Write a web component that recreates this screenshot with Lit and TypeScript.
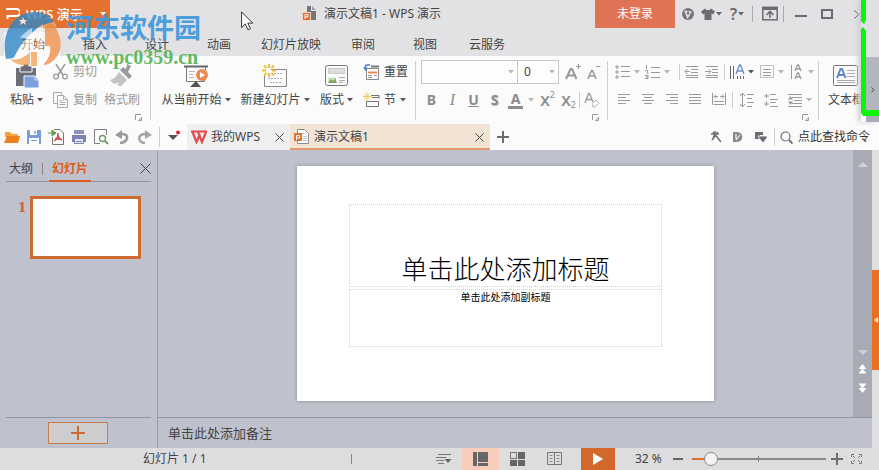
import { LitElement, html, css, svg, TemplateResult } from "lit";
import { customElement } from "lit/decorators.js";

const ic = (w: number, h: number, body: TemplateResult, cls = "") =>
  html`<svg class=${cls} width=${w} height=${h} viewBox="0 0 ${w} ${h}" fill="none" aria-hidden="true">${body}</svg>`;

const caret = (color = "#555") => ic(6, 4, svg`<path d="M0 0h6L3 3.6z" fill=${color}/>`);
const grey = "#9a9a9a";
const pale = "#b5b5b5";
const cross = (s: number, c = "#444") => ic(s, s, svg`<path d="M.5 .5L${s - 0.5} ${s - 0.5}M${s - 0.5} .5L.5 ${s - 0.5}" stroke=${c}/>`);
const lines = (rows: [number, number, number][], c = grey) =>
  svg`${rows.map(([x1, x2, y]) => svg`<path d="M${x1} ${y}.5H${x2}" stroke=${c}/>`)}`;

const icons = {
  paste: ic(26, 24, svg`<path d="M2 4h20v18H2z" fill="#6b6e74"/><path d="M6 2h3a3 3 0 0 1 6 0h3v6H6z" fill="#6b6e74" stroke="#fafafa"/><path d="M10 12h11l4 4v8H10z" fill="#7d9fe0" stroke="#fafafa"/><path d="M21 12v4h4" stroke="#dce6fb"/>`),
  cut: ic(16, 16, svg`<path d="M3 0l7 11M12 0L5 11" stroke=${grey} stroke-width="1.5"/><circle cx="3" cy="12.5" r="2.4" stroke=${grey} stroke-width="1.3"/><circle cx="12" cy="12.5" r="2.4" stroke=${grey} stroke-width="1.3"/>`),
  copy: ic(16, 16, svg`<path d="M4.500 11.500H.5V.5h8v3" stroke="#aaa"/><path d="M4.500 3.500h6l4 4v8h-10zM10.500 3.500v4h4M6.500 8.500h3M6.500 10.500h6M6.500 12.500h6" stroke="#aaa"/>`),
  brush: ic(24, 24, svg`<path d="M17 0l4 2-3 6 4 4-3 3-9-9 3-3 3 2z" fill="#9b9b9b"/><path d="M9 8l8 8-6 6-4-1 2-3-5 2-4-4c4-1 7-4 9-8z" fill="#c3c3c3"/>`),
  play: ic(26, 24, svg`<path d="M1 2.500h24" stroke="#666" stroke-width="2"/><path d="M3.500 3v14.500h18V15M22.500 3v3" stroke="#777"/><path d="M6 7.500h6M6 10.500h4M6 13.500h5" stroke="#b5b5b5"/><path d="M13 17l5 6H7z" fill="#555"/><circle cx="19" cy="11" r="6" fill="#ea8a55"/><path d="M17 8l5 3-5 3z" fill="#fff"/>`),
  newSlide: ic(26, 24, svg`<path d="M9 5.500h15.500v17H2.500V11" stroke="#888"/><path d="M12 9.500h9M6 14.500h15M8 18.500h11" stroke="#aaa" stroke-dasharray="2 1"/><path d="M7 0v4M7 9v4M0 6.500h4M10 6.500h4M2 1.500l2.500 2.500M9.500 9l2.500 2.500M12 1.500L9.500 4M4.500 9L2 11.500" stroke="#f0bd36" stroke-width="2"/>`),
  layout: ic(24, 22, svg`<rect x=".5" y=".5" width="22" height="20" rx="2" stroke="#777"/><path d="M3.500 3.500h16v5h-16z" fill="#ddd" stroke="#aaa" stroke-dasharray="1 1"/><path d="M3 17.500v-5h8v5z" fill="#cfe3c4"/><path d="M3 18l3-4 2 2 2-3 2 5z" fill="#7cab5c"/><path d="M14 12.500h6M14 15.500h6M14 17.500h4" stroke="#aaa"/>`),
  reset: ic(17, 16, svg`<path d="M3.500 4.500h12v11h-12z" fill="#fff" stroke="#888"/><path d="M8 2.500h8" stroke="#777" stroke-width="2"/><path d="M5 8.500h9" stroke="#ea8a55" stroke-width="2"/><path d="M5 11.500h4M11 11.500h3M5 13.500h4" stroke="#999"/><path d="M7 1H4a3 3 0 0 0-2 3" stroke="#4f81c7" stroke-width="1.6"/><path d="M0 3.500h5L2.500 7z" fill="#4f81c7"/>`),
  section: ic(17, 16, svg`<path d="M9 5.500h7M3.500 9.500h12v5h-12zM8 3.500h8v3" stroke="#777"/><path d="M4 0v9M0 4.500h9M1 1.500l6 6M7 1.500l-6 6" stroke="#f2cf5c"/>`),
  bigger: ic(17, 16, svg`<path d="M1 15L5.500 5h1.500l4.500 10M3 11.500h6.500" stroke=${grey} stroke-width="2"/><path d="M13.500 0v5M11 2.500h5" stroke=${grey}/>`),
  smaller: ic(17, 16, svg`<path d="M2 15L5.500 6.500h1L10 15M3.500 12h5" stroke=${grey} stroke-width="1.6"/><path d="M10 2.500h4.500" stroke=${grey}/>`),
  bullets: ic(16, 14, svg`<path d="M2 0v4M0 2h4M2 5v4M0 7h4M2 10v4M0 12h4" stroke=${grey}/>${lines([[6, 15, 1], [6, 15, 6], [6, 15, 11]])}`),
  numbers: ic(16, 14, svg`<path d="M1.500 0v4M0 5.500h2.500v3H3.500M0 10.500h3v3H0M1 12h2" stroke=${grey}/>${lines([[6, 15, 2], [6, 15, 7], [6, 15, 12]])}`),
  outdent: ic(16, 14, svg`${lines([[2, 14, 1], [7, 14, 4], [7, 14, 7], [2, 14, 10], [2, 14, 12]])}<path d="M6 6.500H1.500M3.500 4L1 6.500 3.500 9" stroke=${grey}/>`),
  indent: ic(16, 14, svg`${lines([[2, 14, 1], [8, 14, 4], [8, 14, 7], [2, 14, 10], [2, 14, 12]])}<path d="M1 6.500h5.500M4.500 4L7 6.500 4.500 9" stroke=${grey}/>`),
  direction: ic(16, 16, svg`<path d="M1.500 2v13M4.500 2v13M8.500 12v3M11.500 12v3M14.500 12v3" stroke="#666"/><path d="M7 10l3.500-9h1L15 10M8.500 7h5" stroke="#6c8ec8" stroke-width="1.4"/>`),
  frame: ic(16, 16, svg`<rect x="1.500" y="1.500" width="13" height="12" stroke="#808080" stroke-dasharray="1 1"/>${lines([[4, 12, 5], [4, 12, 8], [4, 12, 11]])}`),
  textFx: ic(16, 16, svg`<path d="M2.500 1v14" stroke=${grey}/><path d="M6 7l2.500-6h1L12 7M7 5h4M6 15l2.500-6h1L12 15M7 13h4" stroke=${grey} stroke-width="1.300"/>`),
  left: ic(16, 14, lines([[3, 15, 1], [3, 11, 4], [3, 15, 7], [3, 11, 10]])),
  center: ic(16, 14, lines([[3, 15, 1], [5, 13, 4], [3, 15, 7], [5, 13, 10]])),
  right: ic(16, 14, lines([[3, 15, 1], [7, 15, 4], [3, 15, 7], [7, 15, 10]])),
  justify: ic(16, 14, lines([[2, 14, 1], [2, 14, 4], [2, 14, 7], [2, 14, 10]])),
  spread: ic(16, 14, svg`<path d="M1.500 0v12M14.500 0v12M3 3.500h4M9 3.500h4M5 1.500l-2 2 2 2M11 1.500l2 2-2 2M3 8.500h10M3 11.500h10" stroke=${grey}/>`),
  spaceA: ic(16, 16, svg`<path d="M3.500 1v14M1 4l2.500-3L6 4M1 12l2.500 3L6 12M8 2.500h7M8 6.500h5M8 10.500h7M8 14.500h5" stroke=${grey}/>`),
  spaceB: ic(16, 16, svg`<path d="M3.500 2v4M1 4h5M3.500 9v5M1 12h5M7 2.500h6M7 7.500h8M7 10.500h6M7 14.500h8" stroke=${grey}/>`),
  spaceC: ic(16, 16, svg`<path d="M1 2.500h14M5 5.500h10M7 8.500h8M5 11.500h10M1 14.500h14" stroke=${grey}/><path d="M3.500 4L6 7.500H1zM3.500 13L1 9.500h5z" fill=${grey}/>`),
  eraser: ic(16, 16, svg`<path d="M1 11L4.500 1.500h1L9 10M2.500 7.500h5" stroke=${grey} stroke-width="1.300"/><path d="M8 12l4-4 3 3-4 4H9z" stroke="#b5b5b5"/>`),
  textBox: ic(26, 22, svg`<rect x=".5" y=".5" width="24" height="20" rx="1" stroke="#777"/><path d="M4 13L7.500 4h1.500l3.500 9M5.500 10h5.500" stroke="#5f87c9" stroke-width="2"/><path d="M14 5.500h8M14 8.500h8M14 11.500h8M4 15.500h18M4 17.500h18" stroke="#aaa"/>`),
  launcher: ic(7, 7, svg`<path d="M.5 6V.5H6M3.500 6.500h3v-3z" stroke="#999"/>`),
  doc: ic(16, 16, svg`<path d="M5 0h4v5h5v9H5z" fill="#75777b"/><path d="M10 0l4 4h-4z" fill="#a0a2a6"/><path d="M.5 6.500h8v8h-8z" fill="#df6d33" stroke="#f3d5c4"/><path d="M3 13V8.500h3v2.500H3" stroke="#fff"/>`),
  tabDoc: ic(16, 16, svg`<path d="M3.500 .5h7l4 4v10h-11z" fill="#fff" stroke="#8c8c8c"/><path d="M7 4.500h4M9 7.500h4M9 9.500h4M9 11.500h4" stroke="#b9c2cc"/><path d="M0 4h8v8H0z" fill="#e0752f"/><path d="M2.500 11V6.500h3v2.500H3" stroke="#fff"/>`),
  wpsLogo: ic(16, 14, svg`<path d="M0 1.500h16M1.500 2l4 10L9 4M7 2l4 10 4-10" stroke="#e24a4d" stroke-width="2.200"/>`),
  folder: ic(16, 16, svg`<path d="M1 3h5l2 2h6v3H1z" fill="#f6a33c"/><path d="M3 7h13l-2 7H0z" fill="#ee7f1f"/>`),
  save: ic(16, 16, svg`<path d="M1 1h14v14H1z" fill="#7b9cdb"/><path d="M4 1h7v5H4zM3 9h10v6H3z" fill="#fff"/><path d="M9 2v3" stroke="#7b9cdb" stroke-width="1.500"/><path d="M5 11.500h6" stroke="#7b9cdb"/>`),
  pdf: ic(17, 16, svg`<path d="M4.500 8v7.500h11V4l-3.500-3.500H6" stroke="#777"/><path d="M10 4c0 4-2 7-4 8M10 6c1 3 2 5 4 5M7 10l6 0" stroke="#d8393b" stroke-width="1.300"/><path d="M0 4h4M4 1l4 3-4 3z" stroke="#5f9e55" fill="#5f9e55"/>`),
  print: ic(16, 16, svg`<path d="M3 1h10v4H3z" fill="#8f93bd"/><path d="M1 6h14v7H1z" fill="#7d82b5"/><path d="M3.500 9.500h9v5h-9z" fill="#e7e8f3" stroke="#7d82b5"/><path d="M5 12.500h6" stroke="#7d82b5"/>`),
  preview: ic(16, 16, svg`<path d="M13.500 6V.5h-12v14H7" stroke="#808080"/><circle cx="9.500" cy="9.500" r="3" stroke="#6a9a5e" stroke-width="1.300"/><path d="M12 12l3 3" stroke="#6a9a5e" stroke-width="1.800"/>`),
  undo: ic(16, 16, svg`<path d="M5 14c8-1 10-9 2-9H4" stroke="#9a9a9a" stroke-width="2.600"/><path d="M0 6l7-5v9z" fill="#9a9a9a"/>`),
  redo: ic(16, 16, svg`<path d="M8 14C0 13 0 5 9 5h2" stroke="#a6a6a6" stroke-width="2.600"/><path d="M15 6L8 1v9z" fill="#a6a6a6"/>`),
  more: ic(14, 14, svg`<path d="M1 5h10L6 10z" fill="#555"/><circle cx="11" cy="2.500" r="2" fill="#d8262c"/>`),
  plus: ic(12, 12, svg`<path d="M6 0v12M0 6h12" stroke="#6e6e6e" stroke-width="2"/>`),
  addSlide: ic(14, 14, svg`<path d="M7 0v14M0 7h14" stroke="#cc6a33" stroke-width="2"/>`),
  wand: ic(12, 14, svg`<path d="M5 1v6M1 4h8M2 10l3-4M3 2l8 10M8 2L3 7" stroke="#6b6e74" stroke-width="1.500"/>`),
  dIcon: ic(12, 14, svg`<path d="M1 2h4c7 0 7 10 0 10H1z" fill="#85898f"/><path d="M4 4v5M4 10l4-5" stroke="#f4f4f4" stroke-width="1.200"/>`),
  flag: ic(14, 14, svg`<path d="M1 2h8v3H6v4H1z" fill="#6b6e74"/><path d="M4 6h9v2l-4 5-4-5z" fill="#6b6e74" stroke="#fafafa" stroke-width=".8"/>`),
  search: ic(13, 13, svg`<circle cx="5.500" cy="5.500" r="4.500" stroke="#6b6e74" stroke-width="1.200"/><path d="M9 9l3.500 3.500" stroke="#6b6e74" stroke-width="1.800"/>`),
  globe: ic(14, 14, svg`<circle cx="7" cy="7" r="6" fill="#75777b"/><path d="M3 3.500l8 1L6.500 12z" fill="#e4e4e6"/><circle cx="7" cy="6" r="1.500" fill="#75777b"/>`),
  shirt: ic(14, 14, svg`<path d="M4 1.500c1 2 5 2 6 0l4 3-2 3-1.500-1V13h-7V6.500L2 7.500 0 4.500z" fill="#6a6c70"/>`),
  up: ic(16, 16, svg`<rect x=".8" y="1.300" width="14.400" height="12.500" stroke="#6a6c70" stroke-width="1.500"/><path d="M1 3h14" stroke="#6a6c70" stroke-width="2"/><path d="M8 12V6M4.500 9L8 5.500 11.500 9" stroke="#6a6c70" stroke-width="1.600"/>`),
  min: ic(12, 12, svg`<path d="M0 8h12" stroke="#6a6c70" stroke-width="2"/>`),
  max: ic(12, 12, svg`<rect x="1" y="2" width="10" height="8" stroke="#6a6c70" stroke-width="2"/>`),
  notes: ic(16, 14, svg`<path d="M2 2.500h13M0 5.500h10M0 8.500h8M2 11.500h6" stroke="#777"/><path d="M8.500 7h7L12 11z" fill="#666"/>`),
  normal: ic(16, 16, svg`<path d="M0 1h15v14H0z" fill="#666"/><path d="M4.500 1v14M5 11.500h10" stroke="#f8cfbd"/>`),
  sorter: ic(16, 16, svg`<rect x=".5" y="1.500" width="6" height="6" stroke="#777"/><path d="M8 1h7v7H8zM0 9h7v6H0zM8 9h7v6H8z" fill="#666"/>`),
  reading: ic(16, 16, svg`<path d="M.5 1.500h14v12H.5zM7.500 1v13" stroke="#777"/><path d="M2.500 4.500h3M2.500 7.500h3M2.500 10.500h3M9.500 4.500h3M9.500 7.500h3M9.500 10.500h3" stroke="#888"/>`),
  show: ic(12, 14, svg`<path d="M1 1l10 6-10 6z" fill="#fff"/>`),
  minus: ic(11, 12, svg`<path d="M0 6h10" stroke="#666" stroke-width="2"/>`),
  fit: ic(11, 12, svg`<path d="M.5 4V1.500H3M8 1.500h2.500V4M10.500 8v2.500H8M3 10.500H.5V8M2 3l2 2M9 3L7 5M2 9l2-2M9 9L7 7" stroke="#777"/>`),
};

@customElement("app-root")
export class AppRoot extends LitElement {
  static styles = css`
    :host {
      display: flex; flex-direction: column; position: relative;
      min-height: 100vh; box-sizing: border-box; overflow: hidden;
      font: 12px/16px "Noto Sans", "Noto Sans CJK SC", sans-serif;
      color: #444; background: #e2e2e5;
    }
    * { box-sizing: border-box; }
    svg { display: block; flex: none; }
    button, input, select { font: inherit; color: inherit; background: none; border: 0; padding: 0; margin: 0; }
    button { display: flex; align-items: center; justify-content: center; white-space: nowrap; }
    .row, header, nav, .tabs, footer { display: flex; align-items: center; }
    .sep { width: 1px; height: 16px; background: #ccc; flex: none; margin: 0 4px; }

    header { height: 28px; }
    .brand { width: 110px; height: 28px; background: #e4712f; color: #fff; gap: 6px; font-weight: 500; font-size: 13px; justify-content: flex-start; padding: 0 4px 0 6px; }
    .brand svg:last-child { margin-left: auto; }
    .caption { display: flex; align-items: center; gap: 6px; flex: 1; padding-left: 192px; }
    .login { width: 80px; height: 28px; background: #e07256; color: #fff; }
    .window { display: flex; align-items: center; gap: 5px; padding: 0 8px 0 5px; }
    .window button { height: 24px; gap: 1px; min-width: 16px; }
    .window .help { font-size: 16px; font-weight: 600; color: #6a6c70; min-width: 20px; }
    .window .wide { min-width: 26px; }
    .window .sep { background: #aaa; margin: 0 4px 0 0; }

    nav { height: 28px; padding-left: 2px; }
    nav button { min-width: 62px; padding: 5px 11px 0; height: 28px; }
    nav .on { background: linear-gradient(#f4f4f4, #fafafa) no-repeat 2px 4px / 56px 24px; color: #8a4a2c; }

    .ribbon { display: flex; height: 68px; background: #fbfbfb; align-items: flex-start; overflow: hidden; }
    .group { display: grid; grid-template-rows: 24px 24px 8px; row-gap: 4px; padding-top: 4px; height: 64px; flex: none; position: relative; justify-content: start; }
    .group + .group::before { content: ""; position: absolute; left: 0; top: 5px; bottom: 0; width: 1px; background: #d0d0d0; }
    .big { grid-row: 1 / 3; flex-direction: column; padding-top: 4px; }
    .big > svg { height: 24px; }
    .label { display: flex; align-items: center; justify-content: center; gap: 3px; height: 24px; }
    .pair { grid-row: 1 / 3; display: flex; flex-direction: column; gap: 4px; }
    .small { gap: 4px; justify-content: flex-start; height: 24px; }
    .dim { color: #9a9a9a; }
    .launch { grid-row: 3; grid-column: -2; justify-self: end; align-self: start; margin-top: -2px; }
    .clip { width: 150px; grid-template-columns: 33px 41px 48px; column-gap: 10px; padding-left: 10px; }
    .clip .brush { padding-right: 12px; }
    .clip .launch { padding-right: 10px; }
    .slides { width: 265px; grid-template-columns: 70px 70px 35px 44px; column-gap: 9px; padding-left: 11px; }
    .fonts { width: 192px; padding-left: 6px; grid-template-columns: 178px; }
    .paras { width: 211px; padding-left: 8px; grid-template-columns: 194px; }
    .text { padding-left: 10px; }
    .combo { display: grid; flex: none; width: 97px; height: 24px; border: 1px solid #c6c6c6; background: #fdfdfd; align-items: center; }
    .combo.size { width: 42px; margin-left: -1px; margin-right: 4px; }
    .combo select { grid-area: 1 / 1; appearance: none; width: 100%; height: 22px; padding-left: 6px; }
    .combo svg { grid-area: 1 / 1; justify-self: end; margin-right: 3px; pointer-events: none; }
    .cmd { flex: none; width: 21px; height: 24px; color: #8c8c8c; font-size: 14px; line-height: 24px; font-weight: 700; gap: 5px; }
    .italic { font-style: italic; font-family: "Liberation Serif", serif; font-weight: 400; font-size: 16px; }
    .under { text-decoration: underline; }
    .shadow { text-shadow: 1px 1px 1px #bbb; }
    .colour { width: 32px; }
    .colour span { line-height: 15px; border-bottom: 3px solid #8c8c8c; padding: 0 3px; }
    .fonts .sep { margin-left: 0; }
    .tool { width: 16px; height: 24px; flex: none; }
    .tool.drop { width: 30px; justify-content: flex-start; gap: 3px; }
    .gap4 { gap: 4px; }
    .gap8 { gap: 8px; }
    .gap8 .sep { margin: 0 -2px 0 -3px; }
    .script { font-size: 15px; font-weight: 600; gap: 0; }
    .script sup, .script sub { font-size: 9px; line-height: 8px; font-weight: 400; }
    .script sup { align-self: flex-start; margin-top: 3px; }
    .script sub { align-self: flex-end; margin-bottom: 3px; }

    .tabs { height: 26px; background: #fbfbfb; padding-left: 4px; padding-right: 9px; }
    .quick { display: flex; gap: 6px; width: 155px; }
    .tabs > .sep { height: 20px; margin: 0 7px 0 0; }
    .more { width: 14px; margin-right: 6px; }
    .tab { display: flex; align-items: center; height: 26px; background: #efefef; width: 103px; padding: 0 6px 0 4px; gap: 4px; }
    .tab.active { width: 200px; background: #f2e4d5; border-bottom: 2px solid #e39a68; padding-top: 2px; }
    .tab button:first-child { gap: 4px; flex: 1; justify-content: flex-start; }
    .add { margin-left: 7px; }
    .right { display: flex; align-items: center; gap: 10px; margin-left: auto; }
    .right .sep { margin: 0 -5px 0 -4px; height: 18px; }
    .find { gap: 5px; color: #333; }

    .body { display: grid; grid-template-columns: 158px minmax(0, 1fr) 7px; flex: 1; }
    aside { background: #bfc2cc; border-right: 1px solid #9b9ea9; display: flex; flex-direction: column; padding: 0 6px; }
    .views { display: flex; height: 32px; padding: 6px 0 0 3px; border-bottom: 1px solid #9195a2; align-items: stretch; }
    .views i { width: 1px; height: 12px; background: #888; margin: 7px 6px 0 9px; }
    .views .on { color: #dc5b1e; border-bottom: 2px solid #dc5b1e; padding: 2px 3px 0; font-weight: 600; margin-bottom: -1px; }
    .views .shut { margin-left: auto; }
    .thumbs { display: flex; flex: 1; padding: 14px 3px 0 12px; gap: 4px; align-items: flex-start; color: #d0622a; font: bold 12px/24px "DejaVu Serif", serif; }
    .thumb { width: 111px; height: 63px; background: #fff; border: 3px solid #cd6c30; }
    .addbar { border-top: 1px solid #9195a2; height: 31px; padding: 4px 0 0 42px; }
    .addbar button { width: 60px; height: 22px; border: 1px solid #cc7a4a; background: #cdcdd0; }
    .main { display: grid; grid-template-rows: minmax(0, 1fr) 31px; background: #bfc2cc; }
    .stage { display: flex; }
    .canvas { flex: 1; display: flex; align-items: center; justify-content: center; min-width: 0; }
    .slide { width: 60%; aspect-ratio: 418 / 235; background: #fff; box-shadow: 0 0 4px #888b95; display: grid; grid-template-rows: 83fr 58fr; gap: 2px; padding: 38px 52px 54px; color: #000; font-weight: 300; }
    .holder { border: 1px dotted #cfcfcf; display: flex; justify-content: center; font-family: "Noto Sans CJK SC", sans-serif; }
    .title { align-items: flex-end; font-size: 26px; line-height: 36px; }
    .sub { font-size: 10px; line-height: 14px; font-weight: 400; }
    .scroll { width: 19px; background: #a8abb4; display: flex; flex-direction: column; align-items: center; padding: 12px 0 24px; gap: 9px; }
    .scroll button:nth-child(2) { margin-top: auto; }
    .notes { border-top: 1px solid #9195a2; font-size: 13px; padding-left: 10px; width: 100%; }
    .notes::placeholder { color: #444; opacity: 1; }
    .dock { background: #dfdfe2; display: flex; align-items: flex-start; padding-top: 120px; }
    .dock button { width: 7px; height: 100px; background: #e87024; }

    footer { height: 22px; background: #dddde0; padding-right: 17px; }
    .count { padding-left: 143px; width: 351px; }
    footer > .sep { height: 10px; margin: 0; background: #888; }
    footer .spacer { flex: 1; }
    footer button { height: 22px; }
    .view { width: 37px; }
    .view.on { background: #f8cdbb; }
    .run { width: 34px; background: #d2692a; margin: 0 20px 0 8px; }
    .zoom { width: 38px; }
    .slider { appearance: none; width: 134px; height: 16px; margin: 0 5px 0 8px;
      background: linear-gradient(#888, #888) no-repeat 66px 5px / 1px 6px,
        linear-gradient(90deg, #df6f2e 12px, #8a8a8a 12px) no-repeat 0 7px / 100% 2px; }
    .slider::-webkit-slider-thumb { appearance: none; width: 14px; height: 14px; border-radius: 50%; background: #f4f4f4; border: 1px solid #888; }
    .fit { margin-left: 8px; }

    .watermark { position: absolute; left: 3px; top: 9px; display: flex; pointer-events: none; }
    .watermark svg { opacity: .8; }
    .mark { color: #3d97dd; font: bold 27px/36px "Noto Sans CJK SC", sans-serif; margin-left: 3px; opacity: .9; }
    .mark p { margin: 0; }
    .mark .site { color: #55b354; font: bold 20px/24px "Liberation Serif", serif; }
    .pointer { position: absolute; left: 241px; top: 11px; pointer-events: none; }
    .panel { position: absolute; right: 0; top: 0; width: 18px; height: 122px; display: flex; flex-direction: column; padding-left: 5px; box-shadow: -3px 0 5px #cfcfd2; }
    .panel .top { height: 57px; background: #e0e0e2; }
    .panel button { height: 65px; background: linear-gradient(#b3b6bf 53px, #a9acb5 53px); }
    .panel > svg { position: absolute; left: -1px; top: 0; }
  `;

  private tool(name: string, icon: TemplateResult, drop?: string) {
    return html`<button class="tool ${drop ? "drop" : ""}" aria-label=${name}>${icon}${drop ? caret(drop) : ""}</button>`;
  }

  private big(label: string, icon: TemplateResult, drop = true, cls = "") {
    return html`<button class="big ${cls}">${icon}<span class="label">${label}${drop ? caret() : ""}</span></button>`;
  }

  render() {
    return html`
      <header>
        <button class="brand">${ic(14, 14, svg`<path d="M0 2h10.500a2.500 2.500 0 0 1 0 7H1.500v3" stroke="#fff" stroke-width="2"/>`)}WPS 演示${caret("#fff")}</button>
        <div class="caption">${icons.doc}<span>演示文稿1 - WPS 演示</span></div>
        <button class="login">未登录</button>
        <div class="window">
          <button aria-label="在线">${icons.globe}</button>
          <button aria-label="皮肤">${icons.shirt}${caret("#666")}</button>
          <button class="help" aria-label="帮助">?${caret("#666")}</button>
          <i class="sep"></i>
          <button aria-label="功能区">${icons.up}</button>
          <i class="sep"></i>
          <button aria-label="最小化">${icons.min}</button>
          <button class="wide" aria-label="最大化">${icons.max}</button>
          <button class="wide" aria-label="关闭">${cross(9)}</button>
        </div>
      </header>

      <nav>
        ${["开始", "插入", "设计", "动画", "幻灯片放映", "审阅", "视图", "云服务"].map(
          (t, i) => html`<button class=${i === 0 ? "on" : ""}>${t}</button>`)}
      </nav>

      <section class="ribbon">
        <div class="group clip">
          ${this.big("粘贴", icons.paste)}
          <div class="pair">
            <button class="small dim">${icons.cut}剪切</button>
            <button class="small dim">${icons.copy}复制</button>
          </div>
          ${this.big("格式刷", icons.brush, false, "dim brush")}
          <button class="launch" aria-label="剪贴板">${icons.launcher}</button>
        </div>
        <div class="group slides">
          ${this.big("从当前开始", icons.play)}
          ${this.big("新建幻灯片", icons.newSlide)}
          ${this.big("版式", icons.layout)}
          <div class="pair">
            <button class="small">${icons.reset}重置</button>
            <button class="small">${icons.section}节 ${caret()}</button>
          </div>
        </div>
        <div class="group fonts">
          <div class="row">
            <span class="combo"><select aria-label="字体"><option></option></select>${caret(pale)}</span>
            <span class="combo size"><select aria-label="字号"><option>0</option></select>${caret(pale)}</span>
            <button class="cmd" aria-label="增大字号">${icons.bigger}</button>
            <button class="cmd" aria-label="减小字号">${icons.smaller}</button>
          </div>
          <div class="row">
            <button class="cmd">B</button>
            <button class="cmd italic">I</button>
            <button class="cmd under">U</button>
            <button class="cmd shadow">S</button>
            <button class="cmd colour"><span>A</span>${caret(pale)}</button>
            <button class="cmd script">X<sup>2</sup></button>
            <button class="cmd script">X<sub>2</sub></button>
            <i class="sep"></i>
            ${this.tool("清除格式", icons.eraser)}
          </div>
          <button class="launch" aria-label="字体设置">${icons.launcher}</button>
        </div>
        <div class="group paras">
          <div class="row">
            ${this.tool("项目符号", icons.bullets, pale)}
            ${this.tool("编号", icons.numbers, pale)}
            <i class="sep"></i>
            <span class="row gap4">${this.tool("减少缩进", icons.outdent)}${this.tool("增加缩进", icons.indent)}</span>
            <i class="sep"></i>
            ${this.tool("文字方向", icons.direction, "#555")}
            ${this.tool("对齐文本", icons.frame, pale)}
            ${this.tool("文字效果", icons.textFx, pale)}
          </div>
          <div class="row gap8">
            ${this.tool("左对齐", icons.left)}${this.tool("居中", icons.center)}${this.tool("右对齐", icons.right)}
            ${this.tool("两端对齐", icons.justify)}${this.tool("分散对齐", icons.spread)}
            <i class="sep"></i>
            ${this.tool("段前间距", icons.spaceA)}${this.tool("段后间距", icons.spaceB)}${this.tool("行距", icons.spaceC, pale)}
          </div>
          <button class="launch" aria-label="段落设置">${icons.launcher}</button>
        </div>
        <div class="group text">${this.big("文本框", icons.textBox, false)}</div>
      </section>

      <section class="tabs">
        <div class="quick">
          ${[["打开", icons.folder], ["保存", icons.save], ["输出为PDF", icons.pdf], ["打印", icons.print], ["打印预览", icons.preview], ["撤销", icons.undo], ["恢复", icons.redo]].map(
            ([n, i]) => html`<button aria-label=${n}>${i}</button>`)}
        </div>
        <i class="sep"></i>
        <button class="more" aria-label="更多">${icons.more}</button>
        <div class="tab"><button>${icons.wpsLogo}我的WPS</button><button aria-label="关闭标签">${cross(9)}</button></div>
        <div class="tab active"><button>${icons.tabDoc}演示文稿1</button><button aria-label="关闭标签">${cross(9)}</button></div>
        <button class="add" aria-label="新建标签">${icons.plus}</button>
        <div class="right">
          <button aria-label="魔法棒">${icons.wand}</button>
          <button aria-label="文档">${icons.dIcon}</button>
          <button aria-label="标记">${icons.flag}</button>
          <i class="sep"></i>
          <button class="find">${icons.search}点此查找命令</button>
        </div>
      </section>

      <div class="body">
        <aside>
          <div class="views">
            <button>大纲</button><i></i><button class="on">幻灯片</button>
            <button class="shut" aria-label="关闭窗格">${cross(11)}</button>
          </div>
          <div class="thumbs"><span>1</span><button class="thumb" aria-label="幻灯片 1"></button></div>
          <div class="addbar"><button aria-label="新建幻灯片">${icons.addSlide}</button></div>
        </aside>
        <div class="main">
          <div class="stage">
            <div class="canvas">
              <div class="slide">
                <div class="holder title">单击此处添加标题</div>
                <div class="holder sub">单击此处添加副标题</div>
              </div>
            </div>
            <div class="scroll">
              <button aria-label="向上">${ic(10, 5, svg`<path d="M0 5h10L5 0z" fill="#cfd1d8"/>`)}</button>
              <button aria-label="向下">${ic(10, 5, svg`<path d="M0 0h10L5 5z" fill="#cfd1d8"/>`)}</button>
              <button aria-label="上一张">${ic(9, 10, svg`<path d="M.5 5h8l-4-5zM.5 9.500h8l-4-5z" fill="#fff"/>`)}</button>
              <button aria-label="下一张">${ic(9, 10, svg`<path d="M.5 .5h8l-4 5zM.5 5h8l-4 5z" fill="#fff"/>`)}</button>
            </div>
          </div>
          <input class="notes" aria-label="备注" placeholder="单击此处添加备注" />
        </div>
        <div class="dock"><button aria-label="展开窗格">${ic(4, 6, svg`<path d="M4 0v6L0 3z" fill="#fff0c8"/>`)}</button></div>
      </div>

      <footer>
        <span class="count">幻灯片 1 / 1</span><i class="sep"></i><span class="spacer"></span>
        <button class="view" aria-label="备注窗格">${icons.notes}</button>
        <button class="view on" aria-label="普通视图">${icons.normal}</button>
        <button class="view" aria-label="幻灯片浏览">${icons.sorter}</button>
        <button class="view" aria-label="阅读视图">${icons.reading}</button>
        <button class="run" aria-label="放映">${icons.show}</button>
        <span class="zoom">32 %</span>
        <button aria-label="缩小">${icons.minus}</button>
        <input class="slider" type="range" min="0" max="100" value="10" aria-label="缩放" />
        <button aria-label="放大">${icons.plus}</button>
        <button class="fit" aria-label="适应窗口">${icons.fit}</button>
      </footer>

      <div class="watermark">
        ${ic(60, 60, svg`<path d="M3 50C-3 22 12 3 32 3c8 0 15 3 19 10-8 1-14 4-20 9-9 8-15 16-20 27z" fill="#2f86c6"/>
          <path d="M3 50c4 2 8-1 11-7C21 29 33 17 51 13l3 5c-6-2-13 0-19 5L16 52c-6 2-10 1-13-2z" fill="#fff" opacity=".5"/>
          <path d="M7 50c7 2 14-1 20-7v13c-9 1-15-1-20-6z" fill="#f3a45c"/>
          <path d="M17 29c4-5 8-8 12-10v21h-6V29z" fill="#fff" opacity=".6"/>
          <path d="M42 37V17c3-2 6-3 8-2 9 11 11 27 1 36-3 3-7 5-11 5 6-6 8-12 7-19z" fill="#f0914a"/>
          <path d="M34 19l6-4v42h-6V42h-6v-5h6z" fill="#fff" opacity=".5"/>
          <path d="M28 43h6v14h-6z" fill="#f3a45c"/>
          <path d="M20 8l1 3h3l-2 2 1 3-3-2-3 2 1-3-2-2h3z" fill="#fff"/>`)}
        <div class="mark"><p>河东软件园</p><p class="site">www.pc0359.cn</p></div>
      </div>
      ${ic(13, 20, svg`<path d="M.6 1v15.500l3.700-3.500 2.700 5.800 2.500-1.100-2.700-5.600h5z" fill="#fff" stroke="#333"/>`, "pointer")}
      <div class="panel">
        <div class="top"></div>
        <button aria-label="展开侧栏">${ic(4, 6, svg`<path d="M.5 .5L3 3 .5 5.500" stroke="#555"/>`)}</button>
        ${ic(19, 116, svg`<path d="M1 0h5v20l-2 4-3-3zM1 29l2-2 3 4v79h13v6H3l-2-3z" fill="#0bf50b"/>`)}
      </div>
    `;
  }
}
